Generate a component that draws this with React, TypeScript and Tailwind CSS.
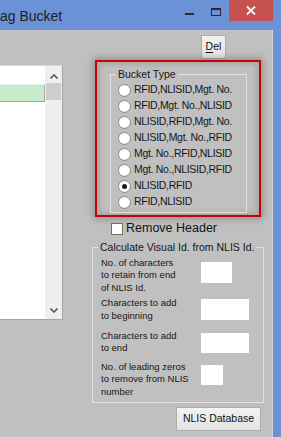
function Radio({ checked }: { checked?: boolean }) {
  return (
    <span className="flex h-[13px] w-[13px] shrink-0 items-center justify-center rounded-full border border-[#8a8a8a] bg-[radial-gradient(circle_at_40%_35%,#ffffff_55%,#e2e2e2)]">
      {checked && <span className="h-[5px] w-[5px] rounded-full bg-[#1a1a1a]" />}
    </span>
  );
}

function Chevron({ up }: { up?: boolean }) {
  return (
    <svg width="8" height="5" viewBox="0 0 8 5">
      <path
        d={up ? "M0.5 4.5 L4 1 L7.5 4.5" : "M0.5 0.5 L4 4 L7.5 0.5"}
        fill="none"
        stroke="#5a5a5a"
        strokeWidth="1.6"
      />
    </svg>
  );
}

const bucketTypes = [
  "RFID,NLISID,Mgt. No.",
  "RFID,Mgt. No.,NLISID",
  "NLISID,RFID,Mgt. No.",
  "NLISID,Mgt. No.,RFID",
  "Mgt. No.,RFID,NLISID",
  "Mgt. No.,NLISID,RFID",
  "NLISID,RFID",
  "RFID,NLISID",
];

export default function App() {
  return (
    <div className="flex h-[437px] w-[281px] flex-col overflow-hidden bg-[#6b91d6] font-['Liberation_Sans',Arial,sans-serif] text-[#161616]">
      {/* Title bar */}
      <div className="flex h-[30px] shrink-0 items-start">
        <span className="mt-[7px] whitespace-nowrap text-[14px] leading-[18px] text-[#1e1e1e]">ag Bucket</span>
        <span className="ml-auto mt-[13px] h-[2px] w-[9px] bg-[#2b2b2b]" />
        <span className="ml-[17px] mt-[8px] h-[8px] w-[10px] border border-t-2 border-[#2b2b2b]" />
        <div className="ml-[8px] mr-[8px] flex h-[21px] w-[44px] items-center justify-center bg-[#c75050]">
          <svg width="10" height="9" viewBox="0 0 10 9">
            <path d="M1 0.5 L9 8.5 M9 0.5 L1 8.5" stroke="#ffffff" strokeWidth="1.8" />
          </svg>
        </div>
      </div>

      {/* Body */}
      <div className="flex flex-1">
        <div className="flex w-[273px] items-start border-r border-[#d6d6d6] bg-[#c0c0c0]">
          {/* List view */}
          <div className="mt-[35px] flex h-[255px] w-[63px] shrink-0 border-t border-r border-b border-t-[#dadada] border-r-[#a4a4a4] border-b-[#a4a4a4] bg-white">
            <div className="flex w-[45px] flex-col">
              <div className="h-[19px] border-b border-[#e4ecf6] bg-white" />
              <div className="h-[17px] border-r border-b border-[#a8a8a8] bg-[#c9eac9]" />
            </div>
            <div className="flex w-[17px] flex-col bg-[#efefef]">
              <div className="flex h-[17px] items-center justify-center pt-[3px]">
                <Chevron up />
              </div>
              <div className="mx-[1px] h-[17px] bg-[#cdcdcd]" />
              <div className="flex-1" />
              <div className="flex h-[17px] items-center justify-center">
                <Chevron />
              </div>
            </div>
          </div>

          {/* Right column */}
          <div className="ml-[29px] flex w-[180px] flex-col">
            <button className="ml-[109px] mt-[5px] flex h-[24px] w-[25px] items-center justify-center border border-[#acacac] bg-gradient-to-b from-[#f2f2f2] to-[#e3e3e3] text-[10.5px] text-[#111]">
              <span className="underline underline-offset-[2px]">D</span>el
            </button>

            {/* Bucket type (highlighted) */}
            <div className="ml-[3px] mt-[1px] h-[157px] w-[166px] border-2 border-[#cc0000] shadow-[0_0_7px_2px_rgba(0,0,0,0.26),inset_0_0_6px_2px_rgba(0,0,0,0.16)]">
              <fieldset className="ml-[13px] mt-[6px] w-[137px] border border-[#e2e2e2] pt-[2px] pb-[2px]">
                <legend className="ml-[5px] px-[2px] text-[10.5px] leading-[12px]">Bucket Type</legend>
                {bucketTypes.map((t, i) => (
                  <div key={t} className="flex h-[16px] items-center pl-[7px]">
                    <Radio checked={i === 6} />
                    <span className="ml-[3px] whitespace-nowrap text-[10.5px] tracking-[-0.3px]">{t}</span>
                  </div>
                ))}
              </fieldset>
            </div>

            {/* Remove header */}
            <div className="ml-[19px] mt-[5px] flex h-[13px] items-center">
              <span className="h-[12px] w-[12px] border border-[#6e6e6e] bg-white" />
              <span className="ml-[3px] whitespace-nowrap text-[12.5px] leading-[13px] text-[#111]">Remove Header</span>
            </div>

            {/* Calculate visual id */}
            <fieldset className="mt-[6px] w-[172px] border border-[#e2e2e2] pb-[4px]">
              <legend className="ml-[5px] px-[2px] text-[10.5px] leading-[12px]">Calculate Visual Id. from NLIS Id.</legend>

              <div className="mt-[4px] flex items-start pl-[8px]">
                <div className="w-[100px] text-[9.5px] leading-[12.4px]">
                  No. of characters
                  <br />
                  to retain from end
                  <br />
                  of NLIS Id.
                </div>
                <div className="mt-[4.5px] h-[21px] w-[31px] bg-white" />
              </div>

              <div className="mt-[3px] flex items-start pl-[8px]">
                <div className="w-[100px] text-[9.5px] leading-[12.4px]">
                  Characters to add
                  <br />
                  to beginning
                </div>
                <div className="mt-[2px] h-[21px] w-[48px] bg-white" />
              </div>

              <div className="mt-[8px] flex items-start pl-[8px]">
                <div className="w-[100px] text-[9.5px] leading-[12.4px]">
                  Characters to add
                  <br />
                  to end
                </div>
                <div className="mt-[2.5px] h-[20px] w-[48px] bg-white" />
              </div>

              <div className="mt-[6px] flex items-start pl-[8px]">
                <div className="w-[100px] text-[9.5px] leading-[12.4px]">
                  No. of leading zeros
                  <br />
                  to remove from NLIS
                  <br />
                  number
                </div>
                <div className="mt-[4.5px] h-[20px] w-[22px] bg-white" />
              </div>
            </fieldset>

            <button className="ml-[84px] mt-[4px] flex h-[24px] w-[85px] items-center justify-center border border-[#acacac] bg-gradient-to-b from-[#f2f2f2] to-[#e3e3e3] text-[10.5px] text-[#111]">
              NLIS Database
            </button>
          </div>
        </div>
        <div className="flex-1" />
      </div>
    </div>
  );
}
